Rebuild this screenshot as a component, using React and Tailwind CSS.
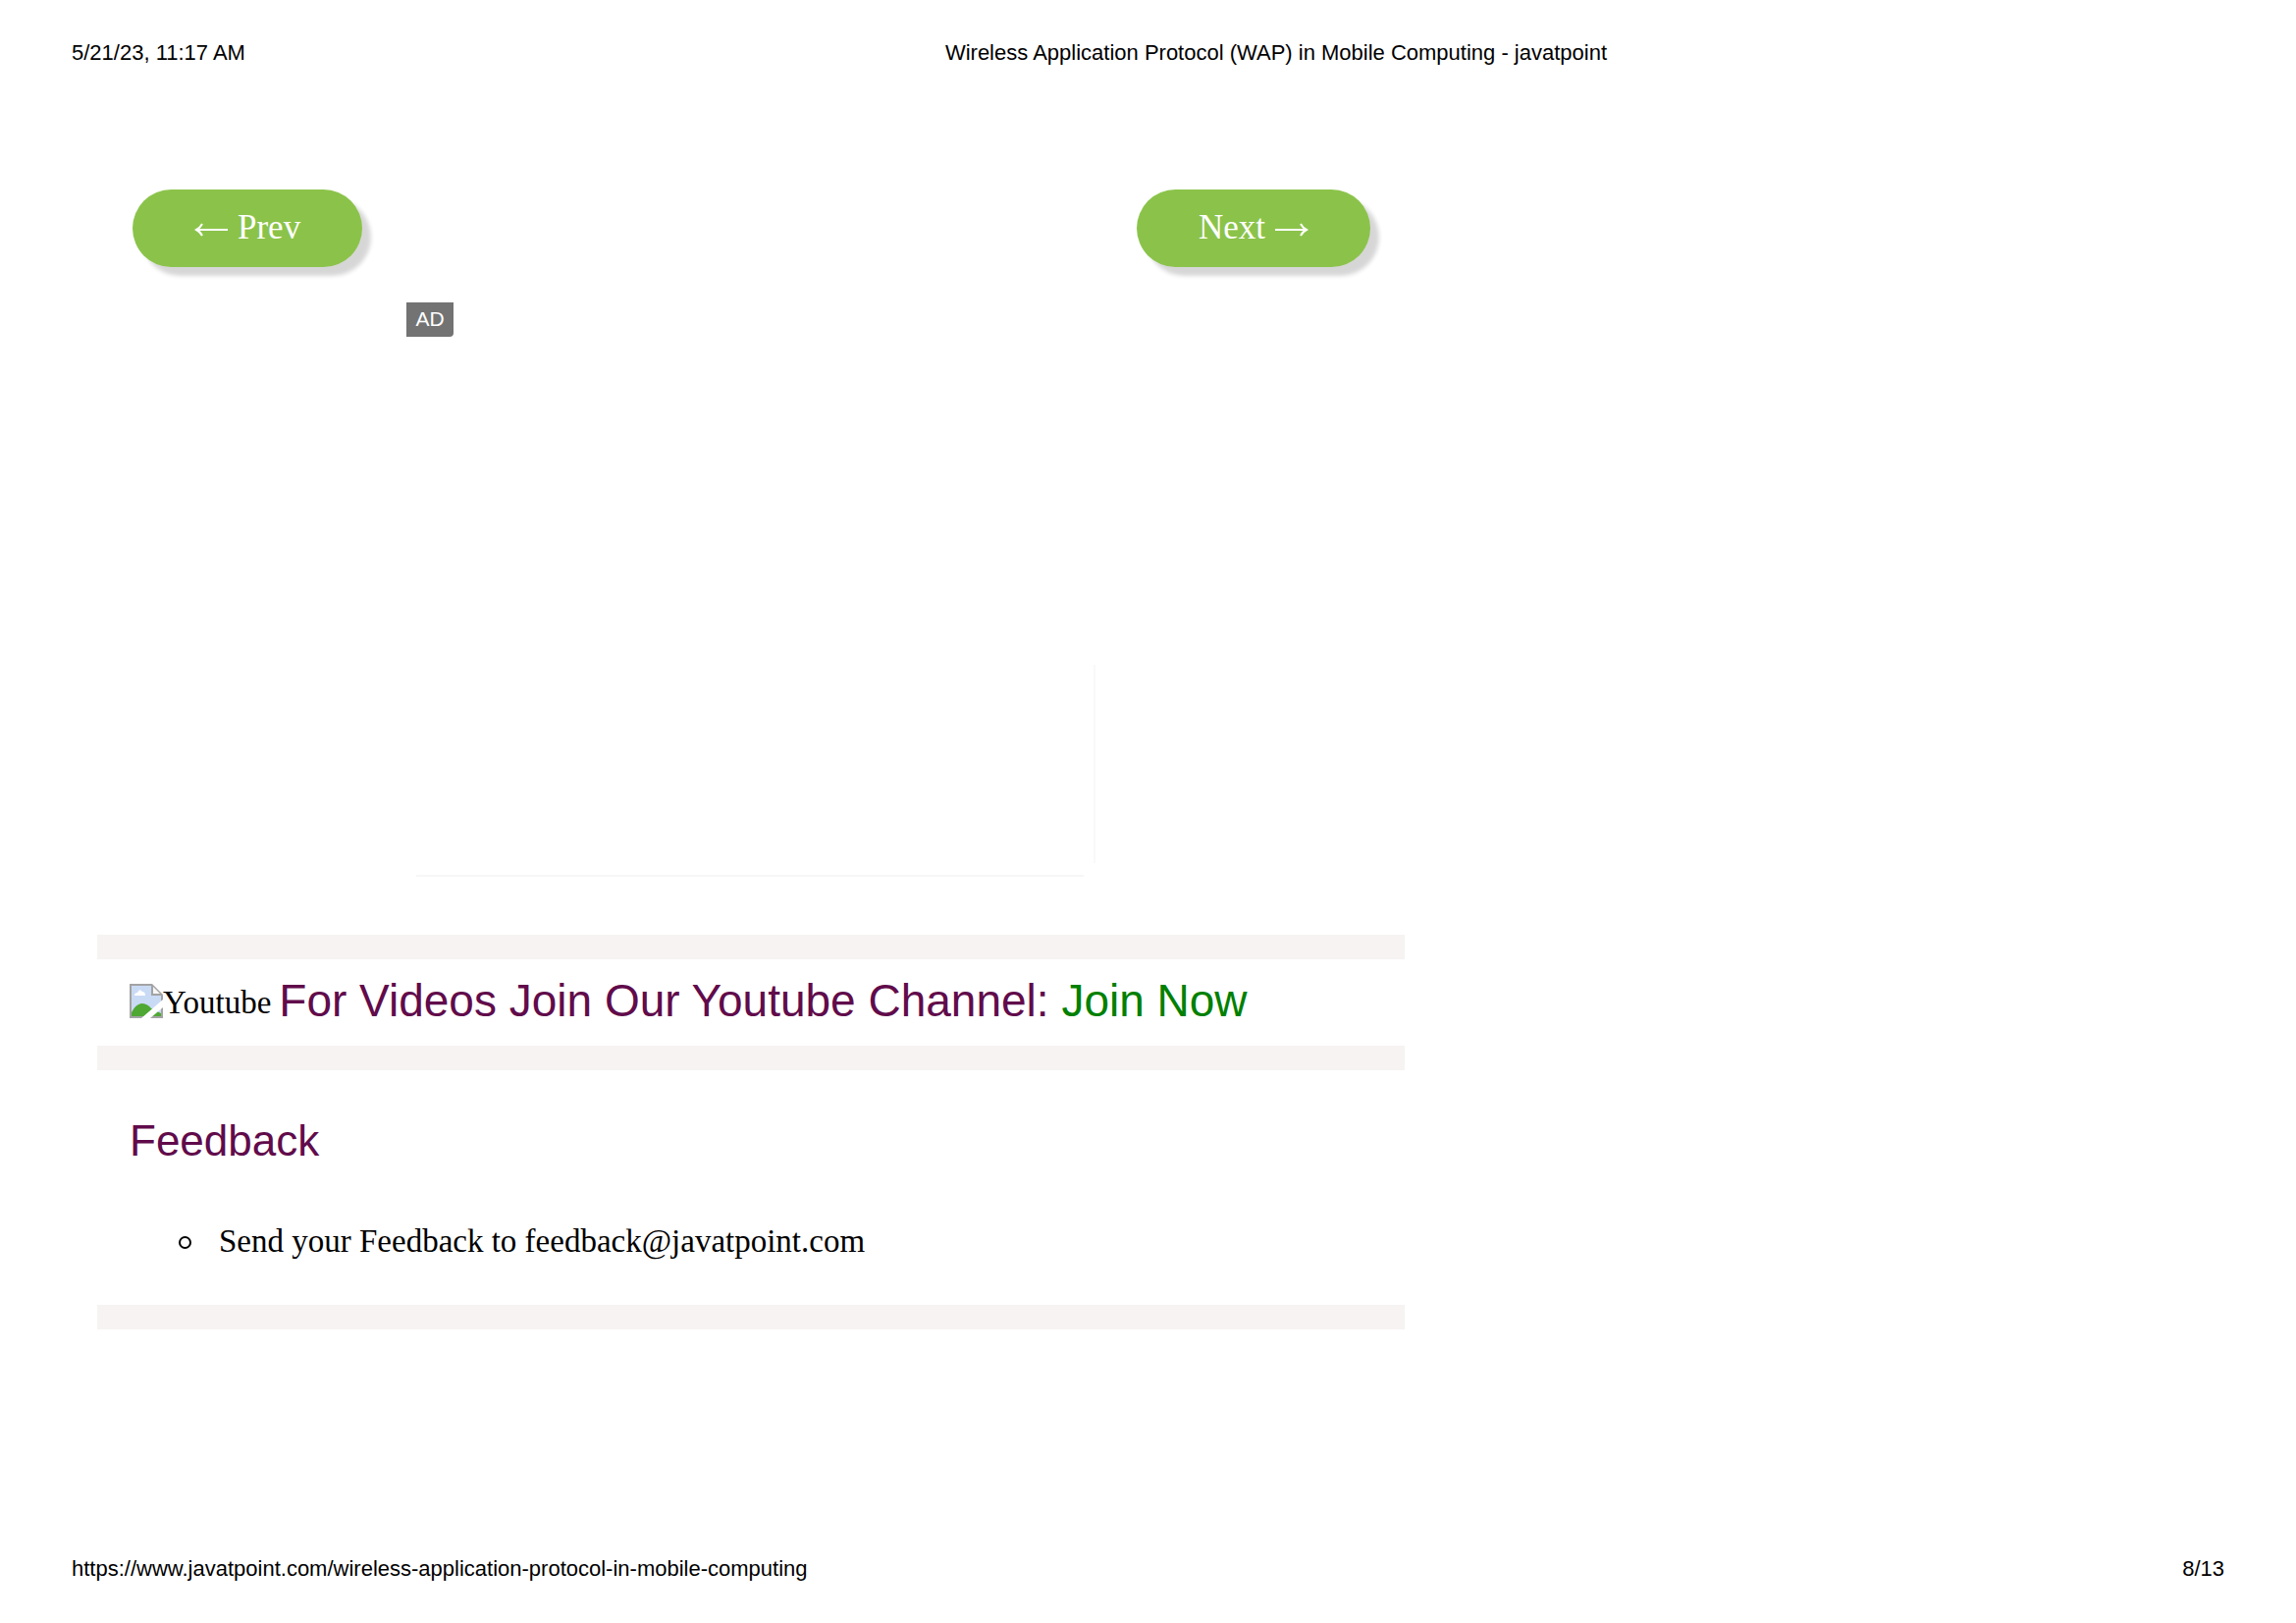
import React from "react";

function BrokenImage() {
  return (
    <svg className="h-[35px] w-[34px] shrink-0" viewBox="0 0 34 35" aria-hidden="true">
      <path d="M0 0H23L34 11V35H0Z" fill="#a3a3a3" />
      <path d="M2 2H22V12H32V33H2Z" fill="#c9daf5" />
      <path d="M5 12Q5 9 8 9Q10 4 13 8Q16 8 16 12Z" fill="#fff" />
      <path d="M2 33V29Q6 21 12 20Q18 20 22 25L32 30V33Z" fill="#4fa833" />
      <path d="M24 3V10H31Z" fill="#f6f6f6" />
      <path d="M34 16L12 35H21L34 24Z" fill="#fff" />
    </svg>
  );
}

function Arrow({ direction }) {
  return (
    <svg
      className="mt-1 h-[14px] w-[35px] shrink-0"
      viewBox="0 0 35 14"
      fill="none"
      stroke="currentColor"
      strokeWidth="2"
      role="img"
      aria-label={direction}
    >
      {direction === "left" ? (
        <path d="M34 7H2M8 1Q6 5 2 7Q6 9 8 13" />
      ) : (
        <path d="M1 7H33M27 1Q29 5 33 7Q29 9 27 13" />
      )}
    </svg>
  );
}

function Divider() {
  return <hr className="h-[25px] border-0 bg-[#f7f3f3]" />;
}

const pill =
  "flex h-[79px] items-center gap-[9px] rounded-full bg-[#8bc34a] px-[63px] pb-0.5 text-[35px] leading-10 text-white shadow-[9px_9px_4px_rgba(0,0,0,0.16)]";

export default function App() {
  return (
    <div className="flex min-h-screen flex-col bg-white font-['Liberation_Sans',Arial,sans-serif] text-[22px] leading-[26px] text-black">
      <header className="flex px-[73px] pt-[41px]">
        <time>5/21/23, 11:17 AM</time>
        <p className="flex-1 pl-[84px] text-center">
          Wireless Application Protocol (WAP) in Mobile Computing - javatpoint
        </p>
      </header>

      <main className="ml-[99px] mt-[126px] max-w-[1332px] font-['Liberation_Serif','Times_New_Roman',serif]">
        <nav className="flex justify-between pl-9 pr-[35px]">
          <a href="#prev" className={pill}>
            <Arrow direction="left" />
            Prev
          </a>
          <a href="#next" className={pill}>
            Next
            <Arrow direction="right" />
          </a>
        </nav>

        <aside className="relative ml-[315px] mt-9 h-[585px] max-w-[702px]">
          <span className="flex h-[35px] w-12 items-center justify-center rounded-br bg-[#737373] pb-0.5 font-['Liberation_Sans',Arial,sans-serif] text-[21px] text-white">
            AD
          </span>
          <span className="absolute bottom-[14px] right-0 h-[202px] w-0.5 bg-[#f9f9f9]" />
          <span className="absolute bottom-0 left-[10px] right-3 h-0.5 bg-[#f7f7f7]" />
        </aside>

        <div className="mt-[59px]">
          <Divider />
          <div className="flex h-[88px] items-center pb-1 pl-[33px]">
            <BrokenImage />
            <span className="mr-2 pt-1 text-[33px] leading-10">Youtube</span>
            <p className="font-['Liberation_Sans',Arial,sans-serif] text-[46px] leading-[52px] text-[#610b4b]">
              For Videos Join Our Youtube Channel:{" "}
              <a href="#join" className="text-[#008000]">Join Now</a>
            </p>
          </div>
          <Divider />
        </div>

        <section>
          <h2 className="pl-[33px] pt-[47px] font-['Liberation_Sans',Arial,sans-serif] text-[44px] leading-[50px] text-[#610b4b]">
            Feedback
          </h2>
          <ul className="pb-[45px] pl-[83px] pt-[57px] text-[33px] leading-10">
            <li className="flex items-center">
              <span className="mr-7 mt-0.5 size-[13px] rounded-full border-2 border-black" />
              Send your Feedback to feedback@javatpoint.com
            </li>
          </ul>
          <Divider />
        </section>
      </main>

      <footer className="mt-auto flex justify-between px-[73px] pb-[42px]">
        <a href="https://www.javatpoint.com/wireless-application-protocol-in-mobile-computing">
          https://www.javatpoint.com/wireless-application-protocol-in-mobile-computing
        </a>
        <span>8/13</span>
      </footer>
    </div>
  );
}
